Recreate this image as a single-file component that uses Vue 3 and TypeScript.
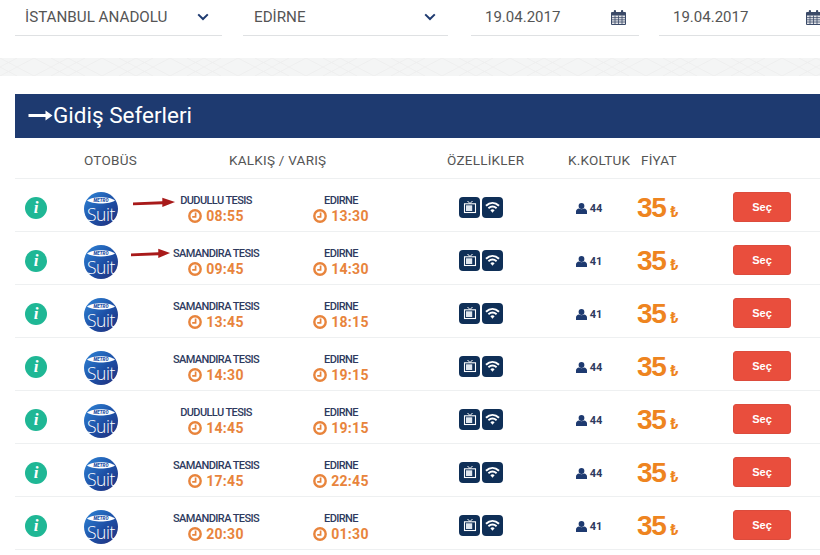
<script setup lang="ts">
interface Trip {
  from: string
  dep: string
  arr: string
  seats: number
  arrow?: 'short' | 'long'
}

const trips: Trip[] = [
  { from: 'DUDULLU TESIS', dep: '08:55', arr: '13:30', seats: 44, arrow: 'short' },
  { from: 'SAMANDIRA TESIS', dep: '09:45', arr: '14:30', seats: 41, arrow: 'long' },
  { from: 'SAMANDIRA TESIS', dep: '13:45', arr: '18:15', seats: 41 },
  { from: 'SAMANDIRA TESIS', dep: '14:30', arr: '19:15', seats: 44 },
  { from: 'DUDULLU TESIS', dep: '14:45', arr: '19:15', seats: 44 },
  { from: 'SAMANDIRA TESIS', dep: '17:45', arr: '22:45', seats: 44 },
  { from: 'SAMANDIRA TESIS', dep: '20:30', arr: '01:30', seats: 41 }
]
</script>

<template>
  <div class="page">
    <div class="filters">
      <div class="field f1">
        <span>İSTANBUL ANADOLU</span>
        <svg class="chev" width="12" height="8" viewBox="0 0 12 8"><path d="M1.2 1.4 6 6l4.8-4.6" fill="none" stroke="#1e3a70" stroke-width="2" /></svg>
      </div>
      <div class="field f2">
        <span>EDİRNE</span>
        <svg class="chev" width="12" height="8" viewBox="0 0 12 8"><path d="M1.2 1.4 6 6l4.8-4.6" fill="none" stroke="#1e3a70" stroke-width="2" /></svg>
      </div>
      <div v-for="n in 2" :key="n" class="field date" :class="n === 1 ? 'f3' : 'f4'">
        <span>19.04.2017</span>
        <svg class="cal" width="15" height="16" viewBox="0 0 15 16">
          <path d="M1 3h13a1 1 0 0 1 1 1v11a1 1 0 0 1-1 1H1a1 1 0 0 1-1-1V4a1 1 0 0 1 1-1z" fill="#3b4a68" />
          <path d="M1 6.500h13V15H1z" fill="#e4e6ea" />
          <path d="M1 8.600h13M1 10.800h13M1 13h13M4 6.500V15M7.500 6.500V15M11 6.500V15" stroke="#3b4a68" stroke-width=".8" />
          <rect x="2.800" y="1" width="2.200" height="3.500" rx="1" fill="#3b4a68" />
          <rect x="10" y="1" width="2.200" height="3.500" rx="1" fill="#3b4a68" />
        </svg>
      </div>
    </div>

    <svg class="strip" width="820" height="18" aria-hidden="true">
      <defs>
        <pattern id="geo" width="68" height="18" patternUnits="userSpaceOnUse">
          <path d="M0 0 34 18 68 0M0 18 34 0 68 18M17 0 0 9 17 18M51 0 68 9 51 18" fill="none" stroke="#eceeee" stroke-width=".8" />
        </pattern>
      </defs>
      <rect width="820" height="18" fill="#f4f5f5" />
      <rect width="820" height="18" fill="url(#geo)" />
    </svg>

    <div class="board">
      <div class="title">
        <svg width="25" height="11" viewBox="0 0 24 11"><path d="M0 4h17V.5l7 5-7 5V7H0z" fill="#fff" /></svg>
        <span>Gidiş Seferleri</span>
      </div>

      <div class="thead">
        <span class="h-bus">OTOBÜS</span>
        <span class="h-route">KALKIŞ / VARIŞ</span>
        <span class="h-feat">ÖZELLİKLER</span>
        <span class="h-seat">K.KOLTUK</span>
        <span class="h-price">FİYAT</span>
      </div>

      <div v-for="(t, i) in trips" :key="i" class="row">
        <div class="c-info">
          <span class="info">i</span>
        </div>
        <div class="c-logo">
          <svg width="34" height="34" viewBox="0 0 34 34">
            <defs>
              <linearGradient :id="'lg' + i" x1="0" y1="0" x2="1" y2="1">
                <stop offset="0" stop-color="#2f86d8" />
                <stop offset=".55" stop-color="#1d4fa5" />
                <stop offset="1" stop-color="#232c78" />
              </linearGradient>
            </defs>
            <circle cx="17" cy="17" r="17" :fill="'url(#lg' + i + ')'" />
            <path d="M3 8.500C8 4 26 4 31 8.500 26 12.500 8 12.500 3 8.500z" fill="#fff" />
            <text x="17" y="10" text-anchor="middle" class="metro">METRO</text>
            <text x="17" y="29" text-anchor="middle" class="suit">Suit</text>
          </svg>
        </div>
        <div class="c-stop">
          <svg v-if="t.arrow" class="annot" :class="t.arrow" viewBox="0 0 44 11" preserveAspectRatio="none">
            <path d="M0 5.500 30 4.200V.8L43 5 30 10V7.200L0 8.200z" fill="#a81a1a" />
          </svg>
          <div class="place">{{ t.from }}</div>
          <div class="time">
            <svg width="14" height="14" viewBox="0 0 14 14"><circle cx="7" cy="7" r="5.700" fill="none" stroke="#e8843c" stroke-width="2.400" /><path d="M7.600 3.600v4.200H4.200" fill="none" stroke="#e8843c" stroke-width="1.700" /></svg>
            <span>{{ t.dep }}</span>
          </div>
        </div>
        <div class="c-stop arr">
          <div class="place">EDIRNE</div>
          <div class="time">
            <svg width="14" height="14" viewBox="0 0 14 14"><circle cx="7" cy="7" r="5.700" fill="none" stroke="#e8843c" stroke-width="2.400" /><path d="M7.600 3.600v4.200H4.200" fill="none" stroke="#e8843c" stroke-width="1.700" /></svg>
            <span>{{ t.arr }}</span>
          </div>
        </div>
        <div class="c-feat">
          <span class="badge">
            <svg width="14" height="14" viewBox="0 0 14 14">
              <path d="M4.500 1 7 3.500 9.500 1" fill="none" stroke="#fff" stroke-width="1" />
              <rect x="1.500" y="3.800" width="11" height="8.700" fill="none" stroke="#fff" stroke-width="1.100" />
              <rect x="3" y="5.300" width="6.200" height="5.700" fill="#dfe6ee" />
            </svg>
          </span>
          <span class="badge">
            <svg width="15" height="13" viewBox="0 0 15 13">
              <path d="M1 4.700C5 1 10 1 14 4.700M3.400 7.200C6 5 9 5 11.600 7.200" fill="none" stroke="#fff" stroke-width="2" />
              <path d="M5.400 9.200C6.800 8 8.200 8 9.600 9.200L7.500 11.800z" fill="#fff" />
            </svg>
          </span>
        </div>
        <div class="c-seat">
          <svg width="11" height="11" viewBox="0 0 11 11"><circle cx="5.500" cy="3" r="2.900" fill="#1e3a70" /><path d="M0 11V8.500C0 6.800 1.500 5.800 2.800 5.500c1.600 1 3.800 1 5.400 0C9.500 5.800 11 6.800 11 8.500V11z" fill="#1e3a70" /></svg>
          <span>{{ t.seats }}</span>
        </div>
        <div class="c-price">
          <span class="amount">35</span><span class="tl">₺</span>
        </div>
        <button class="pick" type="button">Seç</button>
      </div>
    </div>
  </div>
</template>

<style>
html, body { margin: 0; background: #fff; overflow: hidden; }
</style>

<style scoped>
.page {
  width: 820px;
  height: 555px;
  overflow: hidden;
  font-family: Roboto, "Liberation Sans", sans-serif;
  background: #fff;
}
.filters {
  display: flex;
  padding-left: 15px;
  height: 36px;
}
.field {
  border-bottom: 1px solid #dfe1e3;
  display: flex;
  align-items: center;
  justify-content: space-between;
  color: #555;
  font-size: 15.200px;
  flex: none;
  padding-bottom: 2px;
  box-sizing: border-box;
  height: 36px;
}
.f1 { width: 207px; padding-left: 10px; margin-right: 21px; }
.f2 { width: 205px; padding-left: 11px; margin-right: 23px; }
.f1 .chev { margin-right: 13px; }
.f2 .chev { margin-right: 12px; }
.date { font-size: 15px; }
.f3 { width: 168px; padding-left: 14px; margin-right: 20px; }
.f4 { width: 161px; padding-left: 14px; }
.cal { margin-right: 13px; }
.f4 .cal { margin-right: -1px; }
.strip {
  display: block;
  margin-top: 22px;
}
.board {
  margin: 18px 0 0 15px;
}
.title {
  height: 44px;
  background: #1e3a70;
  color: #fff;
  display: flex;
  align-items: center;
  padding: 0 0 2px 13px;
  font-size: 22.500px;
  box-sizing: border-box;
}
.thead {
  height: 41px;
  box-sizing: border-box;
  padding-top: 4px;
  display: flex;
  align-items: center;
  color: #555;
  font-size: 13.500px;
  letter-spacing: .25px;
  border-bottom: 1px solid #eef0f1;
}
.h-bus { margin-left: 69px; width: 145px; }
.h-route { width: 218px; }
.h-feat { width: 121px; }
.h-seat { width: 73px; }
.h-price { flex: none; }
.row {
  display: grid;
  grid-template-columns: 42px 88px 142px 108px 172px 44px 122px 58px;
  align-items: center;
  height: 53px;
  box-sizing: border-box;
  border-bottom: 1px solid #eef0f1;
}
.c-info, .c-logo { display: flex; justify-content: center; }
.c-info { margin-top: 6px; }
.c-logo { margin-top: 8px; }
.info {
  width: 22px;
  height: 22px;
  border-radius: 50%;
  background: #1fb795;
  color: #fff;
  font: italic 700 17px/22px "Liberation Serif", serif;
  text-align: center;
}
.metro {
  font: italic 900 4.500px Roboto, sans-serif;
  fill: #1d4fa5;
}
.suit {
  font: 300 17.500px "Open Sans", sans-serif;
  fill: #fff;
  letter-spacing: -.4px;
}
.c-stop {
  position: relative;
  display: flex;
  flex-direction: column;
  align-items: center;
  margin-top: 8px;
}
.place {
  font-size: 11px;
  font-weight: 500;
  line-height: 14px;
  letter-spacing: -.6px;
  color: #2e3a5e;
}
.time {
  display: flex;
  align-items: center;
  gap: 4px;
  color: #e8843c;
  font-size: 14px;
  font-weight: 700;
  line-height: 17px;
  letter-spacing: .3px;
}
.annot { position: absolute; height: 11px; }
.annot.short { left: -12px; top: 3px; width: 43px; }
.annot.long { left: -14px; top: 1px; width: 40px; }
.c-feat {
  display: flex;
  justify-content: center;
  gap: 2px;
  margin-top: 4px;
}
.badge {
  width: 21px;
  height: 21px;
  border-radius: 4px;
  background: #0f2f57;
  display: flex;
  align-items: center;
  justify-content: center;
}
.c-seat {
  display: flex;
  align-items: center;
  justify-content: center;
  gap: 3px;
  color: #2e3a5e;
  font-size: 11px;
  font-weight: 700;
  margin-top: 6px;
}
.c-price {
  padding-left: 26px;
  color: #ee8420;
  display: flex;
  align-items: baseline;
  font-family: "Liberation Sans", sans-serif;
  font-weight: 700;
  margin-top: 6px;
}
.amount { font-size: 28px; letter-spacing: -1.200px; line-height: 32px; }
.tl { font: 700 14px Inter, "DejaVu Sans", sans-serif; margin-left: 4px; }
.pick {
  width: 58px;
  height: 30px;
  padding: 0;
  border: 1px solid #dc4b3c;
  border-radius: 3px;
  background: #e94e3d;
  color: #fff;
  font: 700 11px "Liberation Sans", sans-serif;
  margin-top: 4px;
}
</style>
